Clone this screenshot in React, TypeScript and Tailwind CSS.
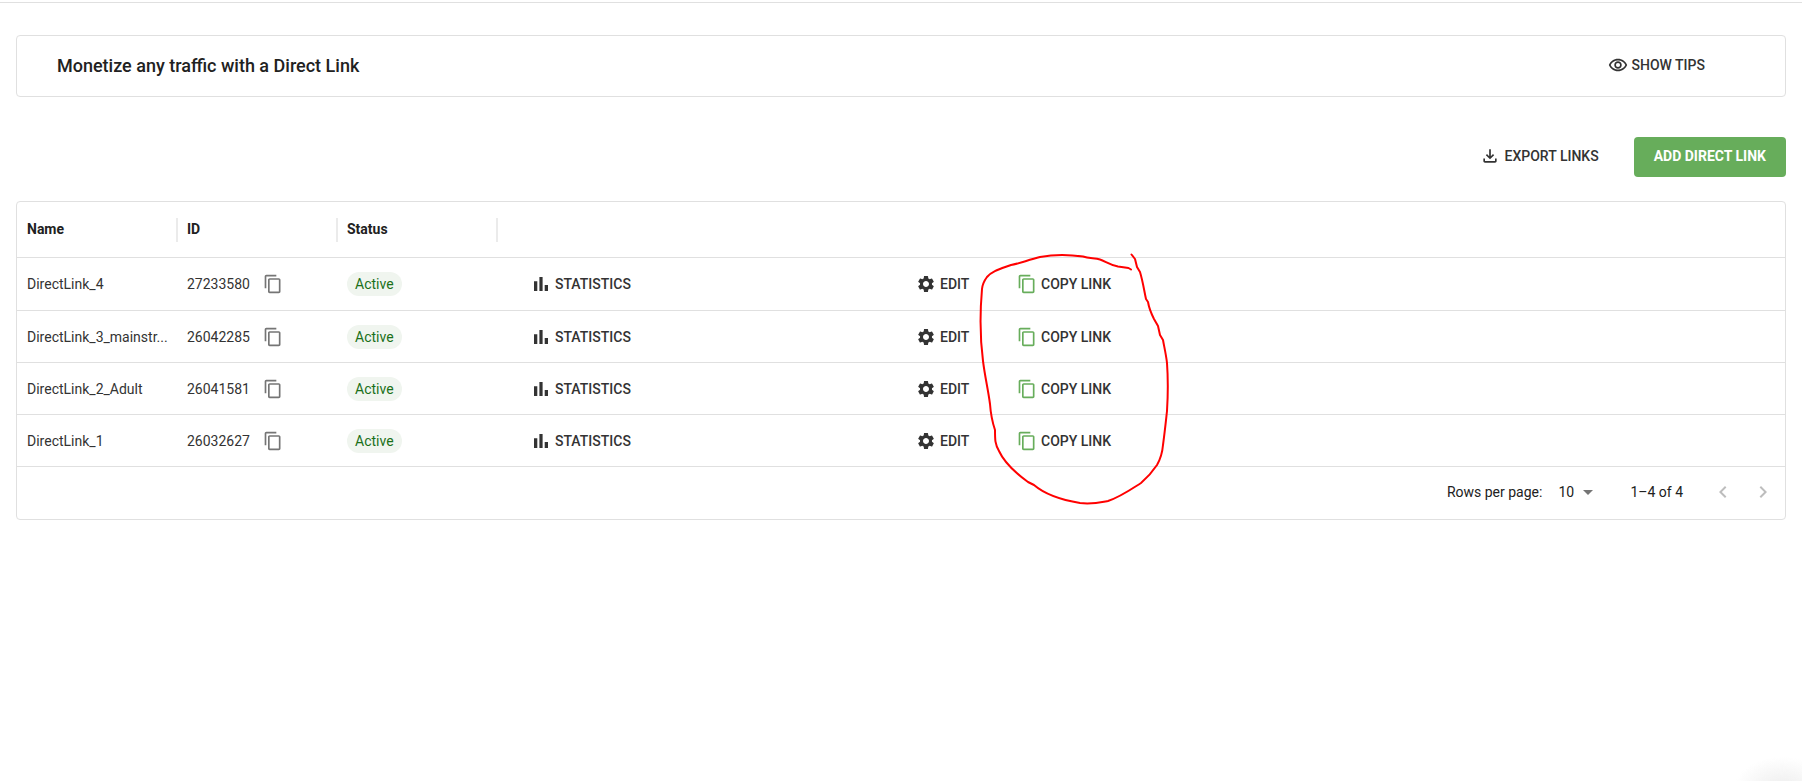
import { MdSettings, MdContentCopy, MdArrowDropDown, MdChevronLeft, MdChevronRight, MdOutlineFileDownload, MdOutlineRemoveRedEye } from 'react-icons/md';

const links = [
  { name: 'DirectLink_4', id: '27233580', status: 'Active' },
  { name: 'DirectLink_3_mainstr...', id: '26042285', status: 'Active' },
  { name: 'DirectLink_2_Adult', id: '26041581', status: 'Active' },
  { name: 'DirectLink_1', id: '26032627', status: 'Active' },
];

const columns = ['Name', 'ID', 'Status'];

function BarsIcon() {
  return (
    <svg className="size-6" viewBox="0 0 24 24" fill="currentColor" aria-hidden="true">
      <path d="M5 9.200h3.300V19H5zM10.400 5h3.200v14h-3.200zm5.300 8H19v6h-3.300z" />
    </svg>
  );
}

function TipsBanner() {
  return (
    <section className="flex h-[62px] items-center justify-between rounded border border-[#e0e0e0] pr-20 pl-10">
      <h1 className="text-lg font-medium">Monetize any traffic with a Direct Link</h1>
      <button type="button" className="flex items-center gap-1 pb-0.5 font-medium text-[#333]">
        <MdOutlineRemoveRedEye className="size-5" />
        SHOW TIPS
      </button>
    </section>
  );
}

function Toolbar() {
  return (
    <div className="mt-10 flex items-center justify-end gap-[35px]">
      <button type="button" className="flex items-center gap-[5px] pb-0.5 font-medium text-[#333]">
        <MdOutlineFileDownload className="size-5" />
        EXPORT LINKS
      </button>
      <button type="button" className="h-10 rounded bg-[#67ad5b] px-5 pb-0.5 font-bold text-white">
        ADD DIRECT LINK
      </button>
    </div>
  );
}

function LinksTable() {
  return (
    <table className="w-full table-fixed border-separate border-spacing-0 text-left">
      <thead>
        <tr className="*:h-14 *:border-b *:border-[#e0e0e0]">
          {columns.map((column) => (
            <th key={column} scope="col" className="w-40 p-0 pl-[10px] font-bold">
              <div className="-mr-px flex items-center justify-between">
                <span className="pb-0.5">{column}</span>
                <span className="h-6 w-0.5 bg-[#ebebeb]" />
              </div>
            </th>
          ))}
          <th scope="col" className="w-96 p-0" aria-label="Statistics" />
          <th scope="col" className="w-[108px] p-0" aria-label="Edit" />
          <th scope="col" className="p-0" aria-label="Copy link" />
        </tr>
      </thead>
      <tbody className="text-[#333]">
        {links.map((link) => (
          <tr key={link.id} className="*:h-[52px] *:border-b *:border-[#e0e0e0] first:*:h-[53px]">
            <td className="pl-[10px] whitespace-nowrap">{link.name}</td>
            <td className="px-[10px]">
              <div className="flex items-center gap-[13px]">
                {link.id}
                <button type="button" aria-label="Copy ID" className="text-[#757575]">
                  <MdContentCopy className="size-5" />
                </button>
              </div>
            </td>
            <td className="px-[10px]">
              <span className="flex h-6 w-fit items-center rounded-full bg-[#f0f5ef] px-2 text-[#1b7019]">{link.status}</span>
            </td>
            <td className="pl-8">
              <a href="#statistics" className="flex w-fit items-center gap-0.5 font-medium">
                <BarsIcon />
                STATISTICS
              </a>
            </td>
            <td className="pl-[35px]">
              <a href="#edit" className="flex w-fit items-center gap-1 font-medium">
                <MdSettings className="size-5" />
                EDIT
              </a>
            </td>
            <td className="pl-7">
              <button type="button" className="flex items-center gap-1 font-medium">
                <MdContentCopy className="size-5 text-[#67ad5b]" />
                COPY LINK
              </button>
            </td>
          </tr>
        ))}
      </tbody>
    </table>
  );
}

function Pagination() {
  return (
    <div className="flex h-[52px] items-center justify-end pr-2.5 pb-0.5">
      <label htmlFor="rows-per-page">Rows per page:</label>
      <div className="ml-4 grid items-center">
        <select id="rows-per-page" className="col-start-1 row-start-1 w-[42px] appearance-none bg-transparent" defaultValue="10">
          <option>10</option>
          <option>25</option>
          <option>50</option>
        </select>
        <MdArrowDropDown className="pointer-events-none col-start-1 row-start-1 size-6 justify-self-end text-[#757575]" />
      </div>
      <span className="ml-[30px]">1–4 of 4</span>
      <div className="ml-7 flex gap-4 text-[#bdbdbd]">
        <button type="button" aria-label="Previous page" disabled>
          <MdChevronLeft className="size-6" />
        </button>
        <button type="button" aria-label="Next page" disabled>
          <MdChevronRight className="size-6" />
        </button>
      </div>
    </div>
  );
}

// Freehand loop drawn over the copy buttons
function Highlight() {
  return (
    <svg
      className="pointer-events-none absolute top-[51px] left-[961px]"
      width="192"
      height="254"
      viewBox="978 253 192 254"
      fill="none"
      stroke="#ff0000"
      strokeWidth="2"
      strokeLinecap="round"
      strokeLinejoin="round"
    >
      <path d="M1131 269.500L1128.500 268L1118 266.500C1110 265 1105 261 1100 259.500C1095 258 1089 258.500 1083 256.500C1069 254.500 1053 254.500 1040 257C1028 260 1018 264 1011 265C1000 269 992 271 987 277C984 281 982.500 284 982 289C980 312 980 338 983 361C985 377 988 389 990 404C991 418 993 424 995 430C995 440 995 444 999 451C1004 462 1017 474 1028 482L1034 485C1048 497 1068 501 1080 503C1092 504.500 1100 502.500 1108 501C1120 497 1130 490 1141 483C1148 477 1153 471 1157 465C1161 458 1162.500 451 1163 445C1165 430 1166 420 1167 411C1168 395 1168 377 1167 363C1166 354 1164 346 1163 340L1160 335L1158 326L1154 319C1151 313 1149 308 1148 302L1146 299C1144 290 1143 282 1140 272L1137 267L1135 259L1131.500 254.500" />
    </svg>
  );
}

export default function App() {
  return (
    <div className="min-h-screen bg-white font-['Roboto',sans-serif] text-sm text-[#212121]">
      <div className="h-[3px] border-b border-[#e0e0e0]" />
      <main className="px-4 pt-8">
        <TipsBanner />
        <Toolbar />
        <section className="relative mt-6 rounded border border-[#e0e0e0]">
          <LinksTable />
          <Pagination />
          <Highlight />
        </section>
      </main>
      <div className="fixed -right-7 -bottom-10 h-16 w-24 rounded-full bg-[radial-gradient(closest-side,#ededed,transparent)]" />
    </div>
  );
}
